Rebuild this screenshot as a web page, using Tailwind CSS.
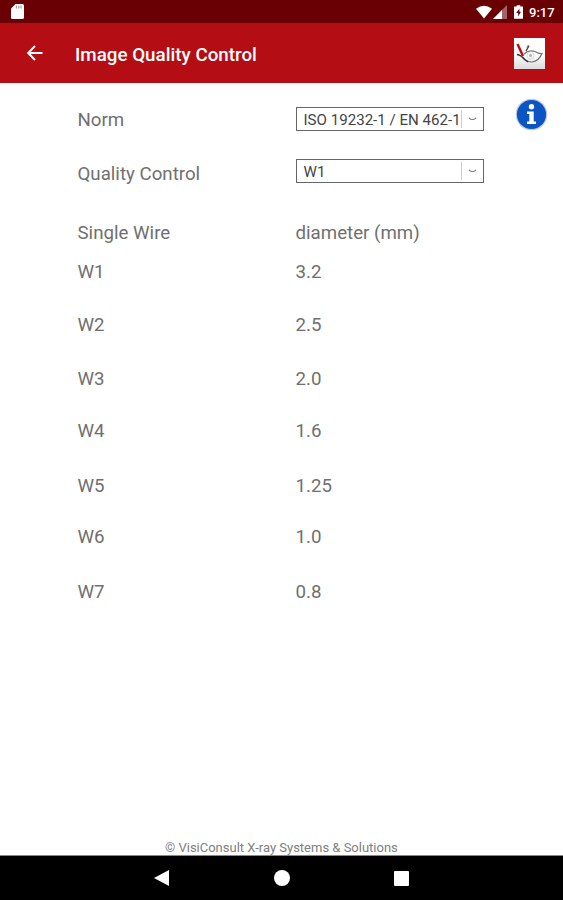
<!DOCTYPE html>
<html lang="en">
<head>
<meta charset="utf-8">
<title>Image Quality Control</title>
<script src="https://cdn.jsdelivr.net/npm/@tailwindcss/browser@4"></script>
</head>
<body class="w-[563px] h-[900px] overflow-hidden bg-white font-[Roboto,sans-serif] flex flex-col text-[#707070]">
<div class="h-[23px] shrink-0 bg-[#690003] flex items-center pl-[11px] pr-[7px] text-white">
  <svg class="w-[13px] h-[15px]" viewBox="0 0 13 15"><path d="M4.5 0H11.500Q13 0 13 1.500V13.500Q13 15 11.500 15H1.500Q0 15 0 13.500V4.500Z" fill="#fff"/><path d="M5.500 1.500v3M7.800 1.500v3M10 1.500v3" stroke="#b09a90" stroke-width="1.200"/></svg>
  <svg class="ml-auto w-[16px] h-[14px]" viewBox="0 0 17 14"><path d="M8.500 14L0 3.500Q8.500-3 17 3.500Z" fill="#fff"/></svg>
  <svg class="ml-px w-[14px] h-[14px]" viewBox="0 0 14 14"><path d="M0 14L14 0V14Z" fill="#a06468"/><path d="M0 14L9 5V14Z" fill="#fff"/></svg>
  <svg class="ml-[7px] w-[9px] h-[14px]" viewBox="0 0 10 15"><path d="M3 0h4v1.500h3V15H0V1.500h3Z" fill="#fff"/><path d="M6 3.500L2.500 8.700H4.600V12.500L7.700 7.300H6Z" fill="#690003"/></svg>
  <span class="ml-[6px] pt-px text-[13px] leading-[15px] font-medium w-[27px] whitespace-nowrap">9:17</span>
</div>
<header class="h-[60px] shrink-0 bg-[#b50d14] flex items-center pl-[27px] pr-[18px] text-white">
  <svg class="w-[16px] h-[16px]" viewBox="0 0 16 16" fill="none" stroke="#fff" stroke-width="2"><path d="M15.500 8H1.500M8 1L1.200 8L8 15"/></svg>
  <h1 class="ml-[32px] text-[18.800px] leading-[24px] font-medium pt-[3px] whitespace-nowrap">Image Quality Control</h1>
  <svg class="ml-auto w-[31px] h-[31px]" viewBox="0 0 31 31" fill="none"><defs><linearGradient id="tile" x1="0" y1="0" x2="0" y2="1"><stop offset="0.500" stop-color="#fff"/><stop offset="1" stop-color="#dcdcdc"/></linearGradient></defs><rect width="31" height="31" fill="url(#tile)"/><path d="M10 16Q15 11 22 14Q25 16 28 15.500Q25 23 18 24Q12 24 9 19" stroke="#6f7675" stroke-width="1.200"/><path d="M3 16.500Q7 17 10 21L14 24" stroke="#333" stroke-width="1.300"/><path d="M12 13L15 8" stroke="#3c2424" stroke-width="1.200"/><path d="M13 10L14.500 7" stroke="#d44" stroke-width="1.200"/><path d="M3.500 6L9 18" stroke="#b80e17" stroke-width="2.400"/><circle cx="16.500" cy="17.500" r="1.500" fill="#a5b0b0"/><circle cx="16.500" cy="17.500" r="3.500" stroke="#ddd"/></svg>
</header>
<main class="relative flex-1 pl-[77.500px] text-[18.700px] leading-[20px]">
  <div class="mt-[27px] h-[20px] flex items-center"><span class="w-[218px]">Norm</span>
    <div class="relative -top-px w-[188px] h-[24px] shrink-0 border border-[#666] flex items-center pl-[7px] text-[15.100px] text-[#444] whitespace-nowrap"><span class="w-[157px] pt-px">ISO 19232-1 / EN 462-1</span><i class="w-px h-[18px] bg-[#ccc]"></i><svg class="ml-[6px] w-[9px] h-[4px]" viewBox="0 0 10 5" fill="none" stroke="#777" stroke-width="1.300"><path d="M0.500 1Q5 5.500 9.500 1"/></svg></div>
  </div>
  <div class="mt-[34px] h-[20px] flex items-center"><span class="w-[218px]">Quality Control</span>
    <div class="relative -top-[3px] w-[188px] h-[24px] shrink-0 border border-[#666] flex items-center pl-[7px] text-[15.100px] text-[#444]"><span class="w-[157px] pt-px">W1</span><i class="w-px h-[18px] bg-[#ccc]"></i><svg class="ml-[6px] w-[9px] h-[4px]" viewBox="0 0 10 5" fill="none" stroke="#777" stroke-width="1.300"><path d="M0.500 1Q5 5.500 9.500 1"/></svg></div>
  </div>
  <div class="mt-[39px] flex"><span class="w-[218px]">Single Wire</span><span>diameter (mm)</span></div>
  <div class="mt-[19px] flex"><span class="w-[218px]">W1</span><span>3.2</span></div>
  <div class="mt-[33px] flex"><span class="w-[218px]">W2</span><span>2.5</span></div>
  <div class="mt-[34px] flex"><span class="w-[218px]">W3</span><span>2.0</span></div>
  <div class="mt-[32px] flex"><span class="w-[218px]">W4</span><span>1.6</span></div>
  <div class="mt-[35px] flex"><span class="w-[218px]">W5</span><span>1.25</span></div>
  <div class="mt-[31px] flex"><span class="w-[218px]">W6</span><span>1.0</span></div>
  <div class="mt-[35px] flex"><span class="w-[218px]">W7</span><span>0.8</span></div>
  <svg class="absolute left-[515px] top-[14.500px] w-[33px] h-[33px]" viewBox="0 0 33 33"><circle cx="16.500" cy="16.500" r="15.800" fill="#c3cbd8"/><circle cx="16.500" cy="16.500" r="14.600" fill="#0a54c4"/><circle cx="16.500" cy="8.800" r="2.700" fill="#fff"/><path d="M12 13.500H18.700V23.500H21V26H12V23.500H14.300V16H12Z" fill="#fff"/></svg>
</main>
<footer class="h-[17px] shrink-0 pl-[165px] text-[13px] leading-[18px] text-[#808080] whitespace-nowrap border-b border-[#888]">© VisiConsult X-ray Systems &amp; Solutions</footer>
<nav class="h-[44px] shrink-0 bg-black flex items-center pl-[154px]">
  <svg class="w-[15px] h-[16px]" viewBox="0 0 15 16"><path d="M15 0V16L0 8Z" fill="#fff"/></svg>
  <i class="ml-[105px] w-[16px] h-[16px] rounded-full bg-white"></i>
  <i class="ml-[104px] w-[15px] h-[15px] rounded-[1px] bg-white"></i>
</nav>
</body>
</html>
